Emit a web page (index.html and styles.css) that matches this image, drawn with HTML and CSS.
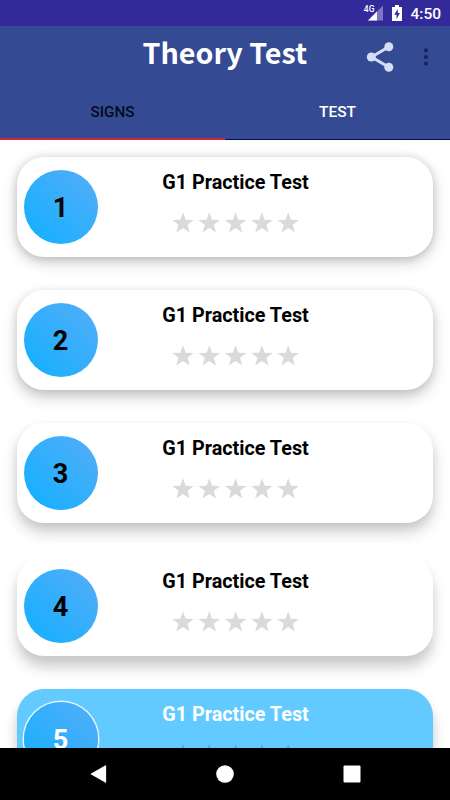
FILE: index.html
```
<!DOCTYPE html>
<html lang="en">
<head>
  <meta charset="UTF-8">
  <meta name="viewport" content="width=device-width, initial-scale=1.0">
  <title>Theory Test</title>
  <link rel="stylesheet" href="styles.css">
</head>
<body>
  <svg class="symbols" aria-hidden="true">
    <symbol id="star" viewBox="0 0 24 24">
      <path d="M12 1.3l2.7 7.5 8.1.1-6.3 4.9 2.2 7.7-6.7-4.5-6.7 4.5 2.2-7.7L1.2 8.9l8.1-.1z"/>
    </symbol>
    <symbol id="stars" viewBox="0 0 131 24">
      <use href="#star" x="1" width="24" height="24"/>
      <use href="#star" x="27.3" width="24" height="24"/>
      <use href="#star" x="53.6" width="24" height="24"/>
      <use href="#star" x="79.9" width="24" height="24"/>
      <use href="#star" x="106.2" width="24" height="24"/>
    </symbol>
  </svg>

  <div class="status-bar">
    <span class="network">4G</span>
    <svg class="signal" viewBox="0 0 16 16">
      <path d="M16 0v16H0z" fill="#8074c5"/>
      <path d="M9.5 6.5V16H0z" fill="#fff"/>
    </svg>
    <svg class="battery" viewBox="0 0 10 16">
      <path d="M3 0h4v2h3v14H0V2h3z" fill="#fff"/>
      <path d="M5.8 4L2.2 9.8h2.3v4.1l3.5-5.8H5.8z" fill="#32299a"/>
    </svg>
    <span class="clock">4:50</span>
  </div>

  <header class="header">
    <div class="toolbar">
      <h1 class="title">Theory Test</h1>
      <svg class="share" viewBox="0 0 28 32">
        <path d="M23 5.7L5.5 16 23 26.3" fill="none" stroke="#d5def5" stroke-width="3"/>
        <circle cx="22.8" cy="5.7" r="4.5"/>
        <circle cx="5.3" cy="16" r="4.5"/>
        <circle cx="22.8" cy="26.3" r="4.5"/>
      </svg>
      <svg class="more" viewBox="0 0 6 20">
        <circle cx="3" cy="3.4" r="2.1"/>
        <circle cx="3" cy="10" r="2.1"/>
        <circle cx="3" cy="16.6" r="2.1"/>
      </svg>
    </div>
    <nav class="tabs">
      <a class="tab active">SIGNS</a>
      <a class="tab">TEST</a>
    </nav>
  </header>

  <main class="list">
    <div class="card depth-1">
      <div class="number">1</div>
      <div class="info">
        <h2>G1 Practice Test</h2>
        <svg class="rating"><use href="#stars"/></svg>
      </div>
    </div>
    <div class="card depth-2">
      <div class="number">2</div>
      <div class="info">
        <h2>G1 Practice Test</h2>
        <svg class="rating"><use href="#stars"/></svg>
      </div>
    </div>
    <div class="card depth-3">
      <div class="number">3</div>
      <div class="info">
        <h2>G1 Practice Test</h2>
        <svg class="rating"><use href="#stars"/></svg>
      </div>
    </div>
    <div class="card depth-4">
      <div class="number">4</div>
      <div class="info">
        <h2>G1 Practice Test</h2>
        <svg class="rating"><use href="#stars"/></svg>
      </div>
    </div>
    <div class="card depth-4 selected">
      <div class="number">5</div>
      <div class="info">
        <h2>G1 Practice Test</h2>
        <svg class="rating"><use href="#stars"/></svg>
      </div>
    </div>
  </main>

  <footer class="nav-bar">
    <svg viewBox="0 0 20 20"><path d="M17.1 1.8v16.4q0 .8-.9.4L2.2 10.5q-.8-.5 0-1L16.2 1.4q.9-.4.9.4z"/></svg>
    <svg viewBox="0 0 20 20"><circle cx="10" cy="10" r="8.8"/></svg>
    <svg viewBox="0 0 20 20"><rect x="1.5" y="1.5" width="17" height="17" rx="1"/></svg>
  </footer>
</body>
</html>
```

FILE: styles.css
```
* {
  margin: 0;
  padding: 0;
  box-sizing: border-box;
}

body {
  height: 800px;
  display: flex;
  flex-direction: column;
  overflow: hidden;
  background: #fff;
  color: #000;
  font-family: Roboto, sans-serif;
}

.symbols {
  display: none;
}

/* Status bar */
.status-bar {
  height: 26px;
  flex-shrink: 0;
  display: flex;
  justify-content: flex-end;
  align-items: center;
  padding-right: 9px;
  background: #32299a;
  color: #fff;
}

.network {
  font-size: 8.5px;
  font-weight: 500;
  line-height: 10px;
  margin: 0 -6px 9px 0;
}

.signal {
  width: 15px;
  height: 16px;
  margin-right: 9px;
}

.battery {
  width: 10px;
  height: 16px;
  margin-right: 8px;
}

.clock {
  font-size: 15.5px;
  font-weight: 500;
  line-height: 26px;
  padding-top: 2px;
}

/* Header */
.header {
  height: 114px;
  flex-shrink: 0;
  background: #344b94;
}

.toolbar {
  height: 60px;
  display: flex;
  align-items: center;
  padding-left: 142.5px;
}

.title {
  width: 223.5px;
  color: #fff;
  font-family: "Noto Sans CJK SC", sans-serif;
  font-size: 28.7px;
  font-weight: 700;
  line-height: 52px;
  padding-bottom: 8px;
  white-space: nowrap;
}

.share {
  width: 28px;
  height: 32px;
  margin: 1px 29px 0 0;
  fill: #d5def5;
}

.more {
  width: 6px;
  height: 20px;
  margin-top: 1px;
  fill: #14265c;
}

.tabs {
  height: 54px;
  display: flex;
}

.tab {
  flex: 1;
  border-bottom: 1px solid #080d55;
  color: #fff;
  font-size: 15.5px;
  font-weight: 500;
  line-height: 52px;
  text-align: center;
}

.tab.active {
  border-bottom: 2px solid #d02443;
  color: #050a18;
  font-size: 15.3px;
}

/* Test list */
.list {
  flex: 1;
  min-height: 0;
  display: flex;
  flex-direction: column;
  gap: 33px;
  padding: 16.6px 16.6px 0;
  overflow: hidden;
}

.card {
  height: 100.1px;
  flex-shrink: 0;
  display: flex;
  padding: 13px 60px 0 7px;
  border-radius: 27px;
  background: #fff;
}

.depth-1 {
  box-shadow: 0 5px 15px rgba(0, 0, 0, 0.2), 0 1px 8px rgba(0, 0, 0, 0.14);
}

.depth-2 {
  box-shadow: 0 7px 15px rgba(0, 0, 0, 0.2), 0 2px 8px rgba(0, 0, 0, 0.1);
}

.depth-3 {
  box-shadow: 0 9px 15px rgba(0, 0, 0, 0.2), 0 3px 8px rgba(0, 0, 0, 0.06);
}

.depth-4 {
  box-shadow: 0 11px 14px rgba(0, 0, 0, 0.2), 0 4px 10px rgba(0, 0, 0, 0.03);
}

.number {
  width: 74px;
  height: 74px;
  flex-shrink: 0;
  border-radius: 50%;
  background: linear-gradient(45deg, #10b0ff, #56adf8);
  font-size: 27px;
  font-weight: 700;
  line-height: 77px;
  text-align: center;
}

.info {
  flex: 1;
  display: flex;
  flex-direction: column;
  align-items: center;
}

.info h2 {
  font-size: 19.8px;
  font-weight: 700;
  line-height: 26px;
  white-space: nowrap;
}

.rating {
  width: 131px;
  height: 24px;
  margin-top: 15px;
  fill: #dadada;
}

.card.selected {
  background: #62caff;
  color: #fff;
}

.selected .number {
  box-shadow: 0 0 0 1.5px #e8f8ff;
}

.selected .rating {
  fill: #4da6d6;
}

/* Navigation buttons */
.nav-bar {
  height: 52px;
  flex-shrink: 0;
  display: flex;
  justify-content: center;
  align-items: center;
  gap: 106.5px;
  background: #000;
}

.nav-bar svg {
  width: 20px;
  height: 20px;
  fill: #fff;
}
```
